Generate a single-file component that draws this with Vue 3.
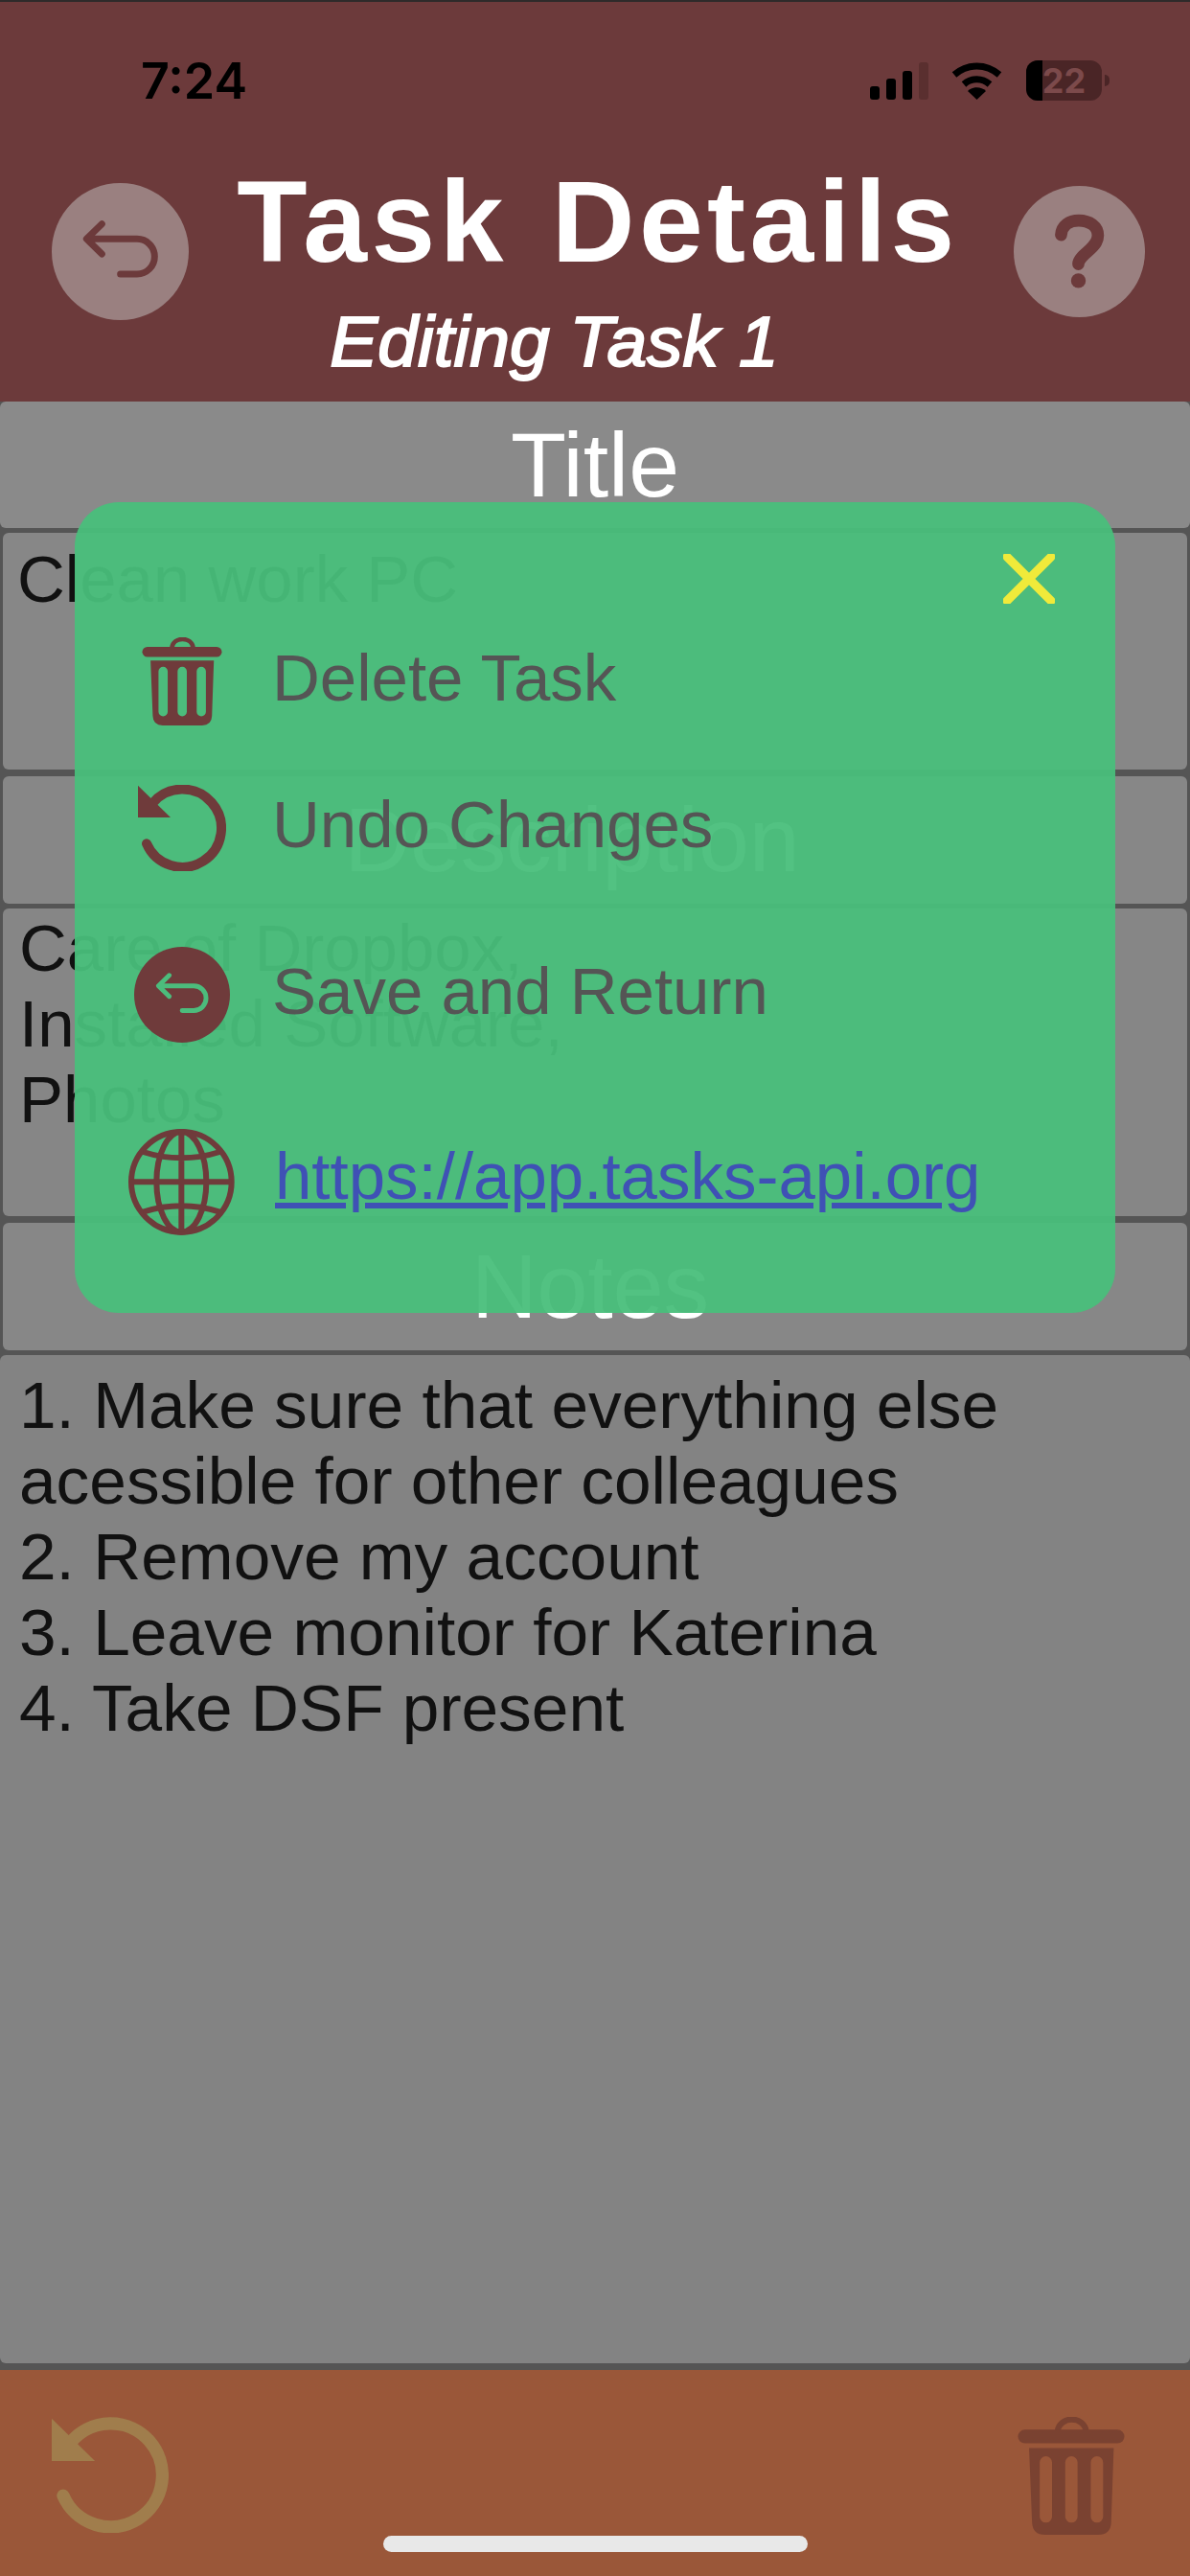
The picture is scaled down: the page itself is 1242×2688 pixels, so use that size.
<script setup>
const notes = [
  '1. Make sure that everything else',
  'acessible for other colleagues',
  '2. Remove my account',
  '3. Leave monitor for Katerina',
  '4. Take DSF present'
]
const description = ['Care of Dropbox,', 'Installed Software,', 'Photos']
const slots = 'M133 182a14 14 0 0 1 29 0V309a14 14 0 0 1-29 0ZM193 182a14 14 0 0 1 29 0V309a14 14 0 0 1-29 0ZM253 182a14 14 0 0 1 29 0V309a14 14 0 0 1-29 0Z'
const trashBody = 'M108 148H307L301 322Q300 352 270 352H146Q116 352 115 322Z' + slots
</script>

<template>
  <div class="screen">
    <header class="header">
      <div class="status">
        <span class="time">7:24</span>
        <div class="status-icons">
          <svg class="signal" viewBox="0 0 61 39">
            <rect x="0" y="25" width="10" height="14" rx="3" />
            <rect x="17" y="17" width="10" height="22" rx="3" />
            <rect x="34" y="9" width="10" height="30" rx="3" />
            <rect class="dim" x="51" y="0" width="10" height="39" rx="3" />
          </svg>
          <svg class="wifi" viewBox="0 0 53 39">
            <path d="M3 13C17 1 36 1 50 13" />
            <path d="M13 23C21 16 32 16 40 23" />
            <path class="wifi-dot" d="M26.5 39L17 30C22 25 31 25 36 30Z" />
          </svg>
          <div class="battery"><span class="level">22</span></div>
          <span class="nub"></span>
        </div>
      </div>
      <div class="head-row">
        <svg class="back" viewBox="43 62 429 429">
          <circle cx="257.5" cy="276.5" r="214.5" class="back-disc" />
          <path class="back-arrow" d="M200 190L152 237L200 284M155 237H310A55 55 0 0 1 310 347H258" />
        </svg>
        <div class="titles">
          <h1 class="page-title">Task Details</h1>
          <p class="subtitle">Editing Task 1</p>
        </div>
        <svg class="help" viewBox="55 42 410 410">
          <circle cx="260" cy="247" r="205" class="back-disc" />
          <path class="help-mark" d="M203 195C205 165 230 150 258 150C292 150 318 168 318 197C318 228 285 245 268 264C260 273 257 280 257 286" />
          <circle cx="257" cy="338" r="23" class="help-dot" />
        </svg>
      </div>
    </header>

    <main class="form">
      <div class="label label-first">Title</div>
      <div class="field field-title">Clean work PC</div>
      <div class="label label-desc">Description</div>
      <div class="field field-desc">
        <div v-for="line in description" :key="line">{{ line }}</div>
      </div>
      <div class="label label-notes">Notes</div>
      <div class="field field-notes">
        <div v-for="line in notes" :key="line">{{ line }}</div>
      </div>
    </main>

    <footer class="footer">
      <svg class="foot-undo" viewBox="70 538 276 270">
        <path class="undo-arc" d="M115 596A122 122 0 1 1 97 722" />
        <path class="undo-head" d="M70 540V640H172Z" />
      </svg>
      <svg class="foot-trash" viewBox="82 75 250 277">
        <path class="trash-handle" d="M175 108C180 72 237 72 242 108" />
        <rect class="trash-fill" x="82" y="105" width="250" height="32" rx="16" />
        <path class="trash-fill" fill-rule="evenodd" :d="trashBody" />
      </svg>
      <div class="home-bar"></div>
    </footer>

    <section class="modal">
      <div class="close-row">
        <svg class="close" viewBox="0 0 54 52">
          <path d="M4 3L50 49M50 3L4 49" />
        </svg>
      </div>
      <div class="row row-delete">
        <span class="icon-cell">
          <svg class="m-trash" viewBox="82 75 250 277">
            <path class="trash-handle" d="M175 108C180 72 237 72 242 108" />
            <rect class="trash-fill" x="82" y="105" width="250" height="32" rx="16" />
            <path class="trash-fill" fill-rule="evenodd" :d="trashBody" />
          </svg>
        </span>
        <span class="row-text">Delete Task</span>
      </div>
      <div class="row row-undo">
        <span class="icon-cell">
          <svg class="m-undo" viewBox="70 538 276 270">
            <path class="undo-arc" d="M115 596A122 122 0 1 1 97 722" />
            <path class="undo-head" d="M70 540V640H172Z" />
          </svg>
        </span>
        <span class="row-text">Undo Changes</span>
      </div>
      <div class="row row-save">
        <span class="icon-cell">
          <svg class="m-save" viewBox="43 62 429 429">
            <circle cx="257.5" cy="276.5" r="214.5" class="save-disc" />
            <path class="save-arrow" d="M200 190L152 237L200 284M155 237H310A55 55 0 0 1 310 347H258" />
          </svg>
        </span>
        <span class="row-text">Save and Return</span>
      </div>
      <div class="row row-link">
        <span class="icon-cell">
          <svg class="m-globe" viewBox="42 625 333 333">
            <g class="globe">
              <circle cx="208" cy="791" r="157" />
              <ellipse cx="208" cy="791" rx="78" ry="157" />
              <path d="M208 634V948M51 791H365M88 697Q208 735 328 697M88 885Q208 847 328 885" />
            </g>
          </svg>
        </span>
        <a class="row-text link" href="#">https://app.tasks-api.org</a>
      </div>
    </section>
  </div>
</template>

<style>
html, body { margin: 0; padding: 0; }
</style>

<style scoped>
.screen {
  position: relative;
  display: flex;
  flex-direction: column;
  width: 1242px;
  height: 2688px;
  overflow: hidden;
  font-family: "Liberation Sans", Arial, sans-serif;
  background: #555;
}

.header {
  flex: none;
  box-sizing: border-box;
  height: 419px;
  border-top: 2px solid #2e2a2a;
  background: #6c3a3b;
}
.status {
  display: flex;
  align-items: center;
  justify-content: space-between;
  box-sizing: border-box;
  height: 164px;
  padding: 0 84px 0 147px;
}
.time {
  font-family: Inter, sans-serif;
  font-weight: 600;
  font-size: 52px;
  color: #000;
}
.status-icons { display: flex; align-items: center; }
.signal { width: 61px; height: 39px; fill: #000; }
.signal .dim { fill: #5a2f2f; }
.wifi { width: 53px; height: 39px; margin-left: 24px; fill: none; stroke: #000; stroke-width: 7; }
.wifi-dot { fill: #000; stroke: none; }
.battery {
  position: relative;
  display: flex;
  align-items: center;
  justify-content: center;
  width: 79px;
  height: 42px;
  margin-left: 25px;
  border-radius: 12px;
  overflow: hidden;
  background: #4a2526;
}
.battery::before {
  content: "";
  position: absolute;
  left: 0;
  top: 0;
  bottom: 0;
  width: 17px;
  background: #000;
}
.level {
  position: relative;
  font-family: Inter, sans-serif;
  font-weight: 700;
  font-size: 36px;
  color: #7c4a4b;
}
.nub {
  width: 5px;
  height: 12px;
  margin-left: 3px;
  border-radius: 0 6px 6px 0;
  background: #4a2526;
}

.head-row {
  display: grid;
  grid-template-columns: 143px 1fr 137px;
  align-items: start;
  padding: 0 47px 0 54px;
}
.back { width: 143px; height: 143px; margin-top: 25px; }
.help { width: 137px; height: 137px; margin-top: 28px; }
.back-disc { fill: #9a8080; }
.back-arrow {
  fill: none;
  stroke: #6c3a3b;
  stroke-width: 21;
  stroke-linecap: round;
  stroke-linejoin: round;
}
.help-mark {
  fill: none;
  stroke: #6c3a3b;
  stroke-width: 38;
  stroke-linecap: round;
}
.help-dot { fill: #6c3a3b; }
.titles { display: flex; flex-direction: column; align-items: center; margin-right: 7px; }
.page-title {
  margin: 5px 0 0;
  font-size: 120px;
  line-height: 120px;
  font-weight: 700;
  letter-spacing: 4.5px;
  word-spacing: 8px;
  color: #fff;
  white-space: nowrap;
}
.subtitle {
  margin: 28px 91px 0 0;
  font-size: 75px;
  line-height: 75px;
  font-style: italic;
  font-weight: 400;
  -webkit-text-stroke: 2px #fff;
  color: #fff;
  white-space: nowrap;
}

.form {
  flex: 1;
  display: flex;
  flex-direction: column;
  padding-bottom: 7px;
  background: #555;
}
.label {
  box-sizing: border-box;
  flex: none;
  height: 133px;
  margin: 7px 3px 5px;
  border-radius: 6px;
  background: #878787;
  color: #fff;
  font-size: 95px;
  line-height: 133px;
  text-align: center;
}
.label-first { height: 132px; margin: 0 0 5px; line-height: 132px; background: #8a8a8a; }
.label-desc { padding-right: 48px; }
.label-notes { padding-right: 10px; }
.field {
  box-sizing: border-box;
  margin: 0 3px;
  padding: 2px 0 0 17px;
  border-radius: 6px;
  background: #868686;
  color: #111;
  font-size: 69px;
  line-height: 79px;
}
.field-title { height: 247px; padding-left: 15px; padding-top: 9px; background: #878787; }
.field-desc { height: 321px; }
.field-notes { flex: 1; margin: 0; padding: 13px 0 0 20px; background: #838383; font-size: 69.4px; }

.footer {
  position: relative;
  flex: none;
  display: flex;
  align-items: flex-start;
  justify-content: space-between;
  box-sizing: border-box;
  height: 215px;
  padding: 49px 68px 0 54px;
  background: #9a5739;
}
.foot-undo { width: 122px; height: 121px; --undo: #a07d4c; }
.foot-trash { width: 112px; height: 123px; --trash: #7a4231; }
.home-bar {
  position: absolute;
  left: 400px;
  top: 173px;
  width: 443px;
  height: 17px;
  border-radius: 9px;
  background: #e8e8e8;
}
.undo-arc {
  fill: none;
  stroke: var(--undo, #6f3b3b);
  stroke-width: 30;
  stroke-linecap: round;
}
.undo-head { fill: var(--undo, #6f3b3b); }
.trash-fill { fill: var(--trash, #6f3b3b); }
.trash-handle {
  fill: none;
  stroke: var(--trash, #6f3b3b);
  stroke-width: 14;
}

.modal {
  position: absolute;
  left: 78px;
  top: 524px;
  box-sizing: border-box;
  width: 1086px;
  height: 846px;
  padding: 54px 63px 0 56px;
  border-radius: 46px;
  background: rgba(73, 191, 123, 0.95);
}
.close-row { display: flex; justify-content: flex-end; height: 52px; }
.close {
  width: 54px;
  height: 52px;
  fill: none;
  stroke: #f0ea3a;
  stroke-width: 9;
  stroke-linecap: round;
}
.row { display: flex; align-items: center; height: 110px; gap: 39px; }
.row-delete { margin-top: 26px; }
.row-undo { margin-top: 43px; }
.row-save { margin-top: 64px; }
.row-link { margin-top: 85px; height: 111px; }
.icon-cell { display: flex; align-items: center; justify-content: center; flex: none; width: 111px; }
.m-trash { width: 84px; height: 92px; }
.m-undo { width: 92px; height: 90px; }
.m-save { width: 100px; height: 100px; }
.m-globe { width: 111px; height: 111px; }
.save-disc { fill: #6f3b3b; }
.save-arrow {
  fill: none;
  stroke: #4cbc7c;
  stroke-width: 21;
  stroke-linecap: round;
  stroke-linejoin: round;
}
.globe { fill: none; stroke: #6f3b3b; stroke-width: 18; }
.row-text {
  margin-bottom: 8px;
  font-size: 69px;
  line-height: 79px;
  color: #555;
  white-space: nowrap;
}
.link { margin-bottom: 13px; margin-left: 3px; color: #3f51b5; text-decoration: underline; }
</style>
